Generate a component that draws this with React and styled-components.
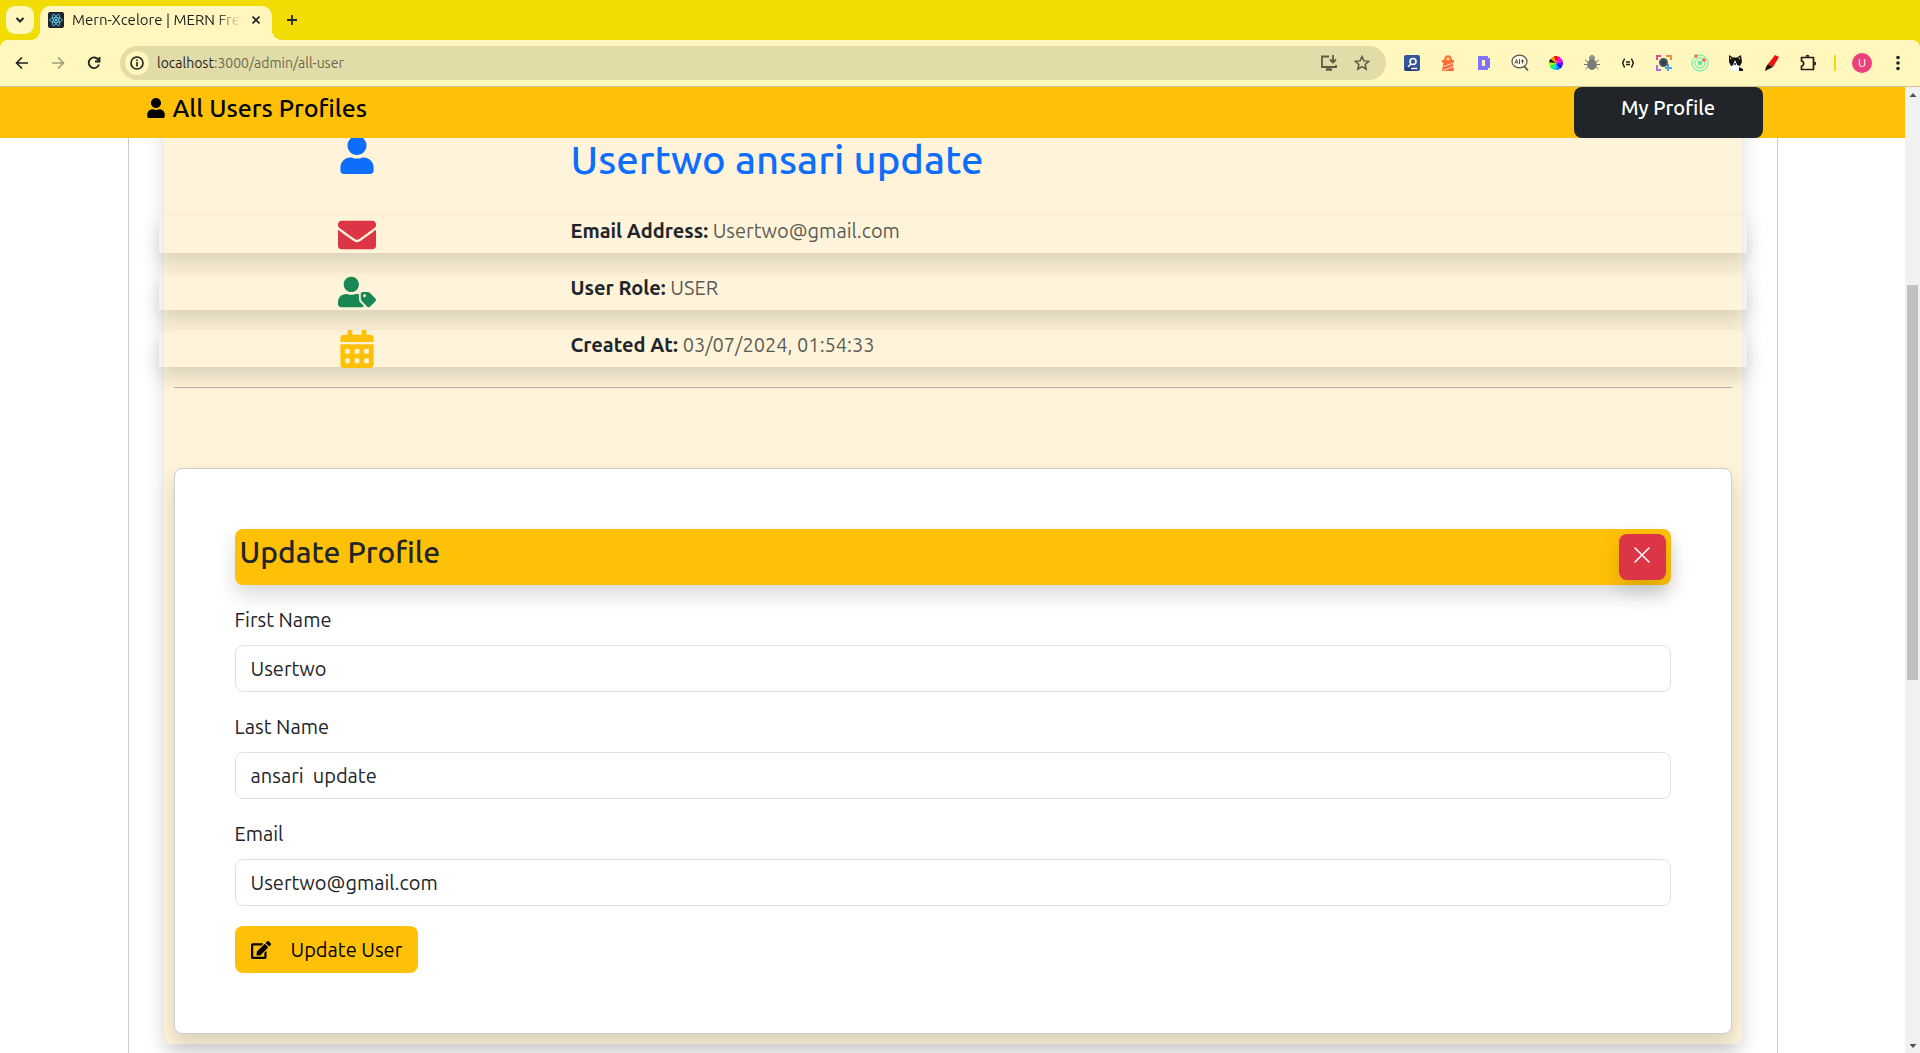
import React from "react";
import styled, { createGlobalStyle, css } from "styled-components";
import { FaUser, FaEnvelope, FaUserTag, FaCalendarAlt, FaEdit } from "react-icons/fa";

const Global = createGlobalStyle`
  *, *::before, *::after { box-sizing: border-box; }
  body {
    margin: 0;
    background: #fff;
    color: #212529;
    font: 20px/30px Ubuntu, "Noto Sans", "Open Sans", sans-serif;
  }
  h1, h2, h3, p { margin: 0; }
  button, input { font: inherit; color: inherit; }
  button { border: 0; padding: 0; background: none; cursor: pointer; }
  svg { display: block; flex: none; }
`;

const yellow = "#ffc107";
const lift = css`box-shadow: 0 10px 20px rgba(0, 0, 0, 0.15);`;
const medium = css`font-weight: 550;`;

const Window = styled.div`
  height: 100vh;
  display: flex;
  flex-direction: column;
  overflow: hidden;
`;

/* ---------- browser chrome ---------- */
const TabStrip = styled.div`
  height: 40px;
  flex: none;
  display: flex;
  align-items: flex-end;
  gap: 6px;
  padding-left: 6px;
  background: #f1dc04;
`;
const TabSearch = styled.button`
  width: 28px;
  height: 28px;
  margin-bottom: 6px;
  border-radius: 9px;
  background: #fff7bd;
  display: grid;
  place-items: center;
`;
const Tab = styled.div`
  width: 232px;
  height: 34px;
  padding: 0 8px;
  display: flex;
  align-items: center;
  border-radius: 10px 10px 0 0;
  background: #fff7bd;
  position: relative;
  &::before, &::after {
    content: "";
    position: absolute;
    bottom: 0;
    width: 10px;
    height: 10px;
  }
  &::before { left: -10px; background: radial-gradient(circle at 0 0, transparent 10px, #fff7bd 10px); }
  &::after { right: -10px; background: radial-gradient(circle at 100% 0, transparent 10px, #fff7bd 10px); }
`;
const Favicon = styled.span`
  width: 16px;
  height: 16px;
  margin-bottom: 6px;
  border-radius: 2px;
  background: #20232a;
  display: grid;
  place-items: center;
`;
const TabTitle = styled.span`
  flex: 1;
  margin: 0 8px 6px;
  overflow: hidden;
  white-space: nowrap;
  font-size: 15px;
  line-height: 20px;
  color: #1f1f1f;
  mask-image: linear-gradient(90deg, #000 calc(100% - 24px), transparent);
`;
const PlainIcon = styled.button`
  width: ${(p) => p.$w || 36}px;
  height: 28px;
  flex: none;
  display: grid;
  place-items: center;
`;
const CloseTab = styled(PlainIcon)`
  margin-bottom: 6px;
`;
const NewTab = styled(PlainIcon)`
  margin-bottom: 6px;
`;
const Toolbar = styled.div`
  height: 47px;
  flex: none;
  display: flex;
  align-items: center;
  padding: 0 4px;
  background: #fff7bd;
  border-bottom: 1px solid #c9c594;
  border-radius: 8px 8px 0 0;
  color: #1f1f1f;
`;
const ToolbarBack = styled.div`
  flex: none;
  background: #f1dc04;
`;
const Omnibox = styled.div`
  flex: 1;
  height: 34px;
  margin: 0 8px;
  padding: 0 8px 0 5px;
  display: flex;
  align-items: center;
  border-radius: 17px;
  background: #e2dca9;
  color: #5c5a45;
`;
const SiteInfo = styled.button`
  width: 24px;
  height: 24px;
  border-radius: 50%;
  background: #fff7bd;
  display: grid;
  place-items: center;
`;
const Url = styled.div`
  flex: 1;
  padding-left: 8px;
  font-size: 14px;
  line-height: 20px;
  color: #6a6750;
  b { font-weight: 400; color: #1f1f1f; }
`;
const Divider = styled.span`
  width: 2px;
  height: 16px;
  margin: 0 8px;
  background: #f1dc04;
`;
const Avatar = styled.span`
  width: 20px;
  height: 20px;
  border-radius: 50%;
  background: #ec407a;
  color: #fff;
  font-size: 12px;
  line-height: 20px;
  text-align: center;
`;

/* ---------- page ---------- */
const View = styled.div`
  flex: 1;
  min-height: 0;
  display: flex;
`;
const Page = styled.main`
  flex: 1;
  min-width: 0;
  overflow: hidden;
`;
const Header = styled.header`
  position: relative;
  z-index: 1;
  background: ${yellow};
`;
const HeaderInner = styled.div`
  max-width: 1650px;
  height: 51px;
  margin: 0 auto;
  padding: 0 15px 0 18px;
  display: flex;
  justify-content: space-between;
  color: #000;
`;
const HeaderTitle = styled.h3`
  display: flex;
  align-items: center;
  gap: 7px;
  height: 42px;
  font-size: 25px;
  line-height: 30px;
  ${medium}
`;
const ProfileButton = styled.button`
  width: 189px;
  height: 51px;
  padding-bottom: 10px;
  border-radius: 8px;
  background: #212529;
  color: #fff;
  ${medium}
`;
const Container = styled.div`
  max-width: 1650px;
  margin: -40px auto 0;
  padding: 0 35px;
  border: 1px solid #ccc;
`;
const UserCard = styled.section`
  padding: 37px 10px 10px;
  margin-bottom: 60px;
  border-radius: 8px;
  background: #fff3d9;
  ${lift}
`;
const Row = styled.div`
  display: flex;
  margin: 0 -15px 20px;
  ${(p) => p.$lift && lift}
`;
const IconCell = styled.div`
  width: 25%;
  height: 37px;
  display: flex;
  align-items: center;
  justify-content: center;
  color: ${(p) => p.$color};
`;
const TextCell = styled.div`
  width: 75%;
  padding: 0 15px;
`;
const UserName = styled.h1`
  height: 60px;
  font-size: 40px;
  line-height: 48px;
  color: #0d6efd;
  ${medium}
`;
const Fact = styled.p`
  color: rgba(33, 37, 41, 0.75);
  strong { color: #212529; }
`;
const Rule = styled.hr`
  margin: 20px 0 80px;
  border: 0;
  border-top: 1px solid rgba(33, 37, 41, 0.3);
`;
const FormCard = styled.form`
  padding: 60px;
  border: 1px solid #ccc;
  border-radius: 8px;
  background: #fff;
  ${lift}
`;
const FormHead = styled.div`
  display: flex;
  justify-content: space-between;
  padding: 5px;
  margin-bottom: 20px;
  border-radius: 8px;
  background: ${yellow};
  ${lift}
`;
const FormTitle = styled.h2`
  font-size: 30px;
  line-height: 36px;
  ${medium}
`;
const CloseButton = styled.button`
  width: 47px;
  height: 46px;
  padding-bottom: 4px;
  display: grid;
  place-items: center;
  border-radius: 8px;
  background: #dc3545;
  color: #fff;
  ${lift}
`;
const Field = styled.div`
  display: flex;
  flex-direction: column;
  gap: 10px;
  margin-bottom: 20px;
`;
const Input = styled.input`
  width: 100%;
  height: 47px;
  padding: 0 15px;
  border: 1px solid #dee2e6;
  border-radius: 8px;
  background: #fff;
`;
const Submit = styled.button`
  height: 47px;
  padding: 0 16px;
  display: flex;
  align-items: center;
  gap: 20px;
  border-radius: 8px;
  background: ${yellow};
  color: #000;
`;

/* ---------- scrollbar ---------- */
const Scrollbar = styled.div`
  width: 15px;
  flex: none;
  display: flex;
  flex-direction: column;
  align-items: center;
  background: #f1f1f1;
`;
const Arrow = styled.span`
  height: 15px;
  display: grid;
  place-items: center;
`;
const Space = styled.span`flex: ${(p) => p.$n};`;
const Thumb = styled.span`
  flex: 395;
  width: 11px;
  background: #c1c1c1;
`;

const Svg = ({ s = 20, vb = 20, children, ...r }) => (
  <svg width={s} height={s} viewBox={`0 0 ${vb} ${vb}`} fill="none" stroke="currentColor" strokeWidth="2" aria-hidden="true" {...r}>
    {children}
  </svg>
);

const extensions = [
  ["Search", <Svg s={16} vb={16} stroke="none"><rect width="16" height="16" rx="2" fill="#34569c" /><path d="M0 14l6-5 8 7H2z" fill="#24407c" /><circle cx="9" cy="6.500" r="3" stroke="#fff" strokeWidth="1.600" /><path d="M7 9L4 12M7 13.500h6" stroke="#fff" strokeWidth="1.600" /></Svg>],
  ["Lighthouse", <Svg s={16} vb={16} stroke="none"><path d="M4 5c0-6.500 8-6.500 8 0z" fill="#ff6a3d" /><path d="M2 5h12v2.500h-1.500L14 16H2l1.500-8.500H2z" fill="#ff6a3d" /><circle cx="8" cy="4" r="1.800" fill="#ffe04f" /><path d="M3.500 11.500l8.500-3M3 15.500l10.500-4" stroke="#ffd9c4" strokeWidth="1" /></Svg>],
  ["Designer", <Svg s={16} vb={16} stroke="none"><path fillRule="evenodd" d="M2 1h10v2h2v10h-2v2H2zM6 5v6h3V5z" fill="#7f73ff" /></Svg>],
  ["Alt text", <Svg s={18} vb={18} stroke="#555" strokeWidth="1.200"><ellipse cx="8.500" cy="7.500" rx="7.500" ry="6.300" fill="#fffbe0" /><path d="M13 12l4 4.500" strokeWidth="1.800" /><path d="M4 9.500l1.500-4 1.500 4M4.500 8.500h2M8.500 5v5M10 7h3M11.500 5.500v4" strokeWidth="1" /></Svg>],
  ["Colour wheel", <Svg s={14} vb={14} stroke="none">{["#ff0000", "#ff00a0", "#ff00ff", "#8000ff", "#0000ff", "#0080ff", "#00e0e0", "#00ff40", "#a0ff00", "#111111", "#ff9000"].map((c, i) => {
    const step = (2 * Math.PI) / 11, a = i * step - 1.9, b = a + step;
    return <path key={c} fill={c} d={`M7 7L${7 + 7 * Math.cos(a)} ${7 + 7 * Math.sin(a)}A7 7 0 0 1 ${7 + 7 * Math.cos(b)} ${7 + 7 * Math.sin(b)}z`} />;
  })}</Svg>],
  ["Bug", <Svg s={16} vb={16} stroke="#777" strokeWidth="1"><circle cx="8" cy="3" r="2.400" fill="#999" /><ellipse cx="8" cy="9.500" rx="4.200" ry="5" fill="#7c7c7c" /><path d="M1 5l3 2M15 5l-3 2M0 9.500h4M16 9.500h-4M1.500 14l3-2.500M14.500 14l-3-2.500" /></Svg>],
  ["JSON", <Svg s={14} vb={14} strokeWidth="1.500"><path d="M4 3C2 3 3 7 1 7c2 0 1 4 3 4M10 3c2 0 1 4 3 4-2 0-1 4-3 4M5 6h4M5 8.500h4" /></Svg>],
  ["Capture", <Svg s={16} vb={16}><path d="M1 5V1h4" stroke="#ec4899" /><path d="M10 1h5v4" stroke="#f08a4b" /><path d="M1 10v5h4" stroke="#b06ae0" /><path d="M12 9v7M9 13h7" stroke="#4aa8e0" /><circle cx="7.500" cy="7.500" r="3.500" fill="#333f50" stroke="#4b5563" /></Svg>],
  ["Orbit", <Svg s={18} vb={18} stroke="#7df0b8" strokeWidth="1.300"><circle cx="9" cy="9" r="8" /><circle cx="9" cy="9" r="5" /><circle cx="9" cy="9" r="2.400" fill="#5ce8a4" stroke="none" /><circle cx="5" cy="2" r="1.700" fill="#f26b3a" stroke="none" /><circle cx="13" cy="6" r="1.700" fill="#f2553a" stroke="none" /></Svg>],
  ["Cat", <Svg s={16} vb={16} stroke="none"><path d="M4 8h7l2 5 1 3H3l-1-4z" fill="#fff" /><path d="M1 0l4 2.500h4L13 0l1 7-2 4-3-1-2-4-1 4-3 1-2-4z" fill="#151515" /><path d="M7 5l2 5H5z" fill="#fff" /><path d="M2 2l2 1.500-2 1zM12 2l-2 1.500 2 1z" fill="#f0a030" /><circle cx="7" cy="9" r="1" fill="#151515" /><path d="M11 12l4 2v2h-4z" fill="#151515" /></Svg>],
  ["Marker", <Svg s={16} vb={16} stroke="none"><path d="M11 0l4 2-6 10-5-3z" fill="#ef1010" /><path d="M4 9l5 3-4 2-4 2 1-4z" fill="#2a1010" /></Svg>],
  ["Extensions", <Svg s={18} vb={18} strokeWidth="1.700"><path d="M2.500 3.500h12v12h-12v-3.500c2.800 0 2.800-5 0-5z" strokeLinejoin="round" /><path d="M6.500 2.700a2 2 0 0 1 4 0zM15.200 7.500a2 2 0 0 1 0 4z" fill="currentColor" stroke="none" /></Svg>],
];

const facts = [
  [FaEnvelope, "#dc3545", "Email Address:", "Usertwo@gmail.com"],
  [FaUserTag, "#198754", "User Role:", "USER"],
  [FaCalendarAlt, yellow, "Created At:", "03/07/2024, 01:54:33"],
];
const fields = [
  ["firstName", "First Name", "text", "Usertwo"],
  ["lastName", "Last Name", "text", "ansari  update"],
  ["email", "Email", "text", "Usertwo@gmail.com"],
];

function BrowserChrome() {
  return (
    <>
      <TabStrip>
        <TabSearch aria-label="Search tabs"><Svg s={10} vb={10}><path d="M1.500 3L5 6.500 8.500 3" /></Svg></TabSearch>
        <Tab>
          <Favicon>
            <Svg s={14} vb={14} stroke="#61dafb" strokeWidth="0.800">
              <ellipse cx="7" cy="7" rx="6.300" ry="2.400" />
              <ellipse cx="7" cy="7" rx="6.300" ry="2.400" transform="rotate(60 7 7)" />
              <ellipse cx="7" cy="7" rx="6.300" ry="2.400" transform="rotate(120 7 7)" />
              <circle cx="7" cy="7" r="1" fill="#61dafb" />
            </Svg>
          </Favicon>
          <TabTitle>Mern-Xcelore | MERN Fre</TabTitle>
          <CloseTab $w={16} aria-label="Close tab"><Svg s={8} vb={8} strokeWidth="1.600"><path d="M0.500 0.500l7 7M7.500 0.500l-7 7" /></Svg></CloseTab>
        </Tab>
        <NewTab $w={28} aria-label="New tab"><Svg s={10} vb={10} strokeWidth="1.800"><path d="M5 0v10M0 5h10" /></Svg></NewTab>
      </TabStrip>
      <ToolbarBack>
        <Toolbar>
          <PlainIcon aria-label="Back"><Svg s={14} vb={14} strokeWidth="1.600"><path d="M13 7H2M7 1.500L1.500 7 7 12.500" /></Svg></PlainIcon>
          <PlainIcon aria-label="Forward"><Svg s={14} vb={14} stroke="#a09c78" strokeWidth="1.600"><path d="M1 7h11M7 1.500L12.500 7 7 12.500" /></Svg></PlainIcon>
          <PlainIcon aria-label="Reload"><Svg s={14} vb={14} strokeWidth="1.800"><path d="M12 8.500A5.300 5.300 0 1 1 11.500 4M12.500 1v4.500H8" /></Svg></PlainIcon>
          <Omnibox>
            <SiteInfo aria-label="Site information"><Svg s={14} vb={14} stroke="#1f1f1f" strokeWidth="1.600"><circle cx="7" cy="7" r="6" /><path d="M7 6v4.500M7 3.500V5" /></Svg></SiteInfo>
            <Url><b>localhost</b>:3000/admin/all-user</Url>
            <PlainIcon $w={33} aria-label="Install"><Svg s={18} vb={18} strokeWidth="1.800"><path d="M9 2.500H2v10.500h14V11M13 1v7M10 5.500l3 3 3-3" /><path d="M6 15.500h6" strokeWidth="2.500" /></Svg></PlainIcon>
            <PlainIcon $w={33} aria-label="Bookmark"><Svg s={16} vb={16} strokeWidth="1.500"><path d="M8 1.500l1.900 4.400 4.800.4-3.600 3.200 1.100 4.700L8 11.700l-4.200 2.500 1.100-4.700L1.300 6.300l4.800-.4z" /></Svg></PlainIcon>
          </Omnibox>
          {extensions.map(([name, icon]) => <PlainIcon key={name} aria-label={name}>{icon}</PlainIcon>)}
          <Divider />
          <PlainIcon aria-label="Account"><Avatar>U</Avatar></PlainIcon>
          <PlainIcon aria-label="Menu"><Svg s={16} vb={16} stroke="none" fill="currentColor"><circle cx="8" cy="2.500" r="1.800" /><circle cx="8" cy="8" r="1.800" /><circle cx="8" cy="13.500" r="1.800" /></Svg></PlainIcon>
        </Toolbar>
      </ToolbarBack>
    </>
  );
}

export default function App() {
  return (
    <Window>
      <Global />
      <BrowserChrome />
      <View>
        <Page>
          <Header>
            <HeaderInner>
              <HeaderTitle><FaUser size={20} />All Users Profiles</HeaderTitle>
              <ProfileButton>My Profile</ProfileButton>
            </HeaderInner>
          </Header>
          <Container>
            <UserCard>
              <Row>
                <IconCell $color="#0d6efd"><FaUser size={38} /></IconCell>
                <TextCell><UserName>Usertwo ansari update</UserName></TextCell>
              </Row>
              {facts.map(([Icon, color, label, value]) => (
                <Row key={label} $lift>
                  <IconCell $color={color}><Icon size={38} /></IconCell>
                  <TextCell><Fact><strong>{label}</strong> {value}</Fact></TextCell>
                </Row>
              ))}
              <Rule />
              <FormCard onSubmit={(e) => e.preventDefault()}>
                <FormHead>
                  <FormTitle>Update Profile</FormTitle>
                  <CloseButton type="button" aria-label="Close"><Svg s={16} vb={16} strokeWidth="1.500" strokeLinecap="round"><path d="M1 1l14 14M15 1L1 15" /></Svg></CloseButton>
                </FormHead>
                {fields.map(([id, label, type, value]) => (
                  <Field key={id}>
                    <label htmlFor={id}>{label}</label>
                    <Input id={id} type={type} defaultValue={value} />
                  </Field>
                ))}
                <Submit type="submit"><FaEdit size={20} />Update User</Submit>
              </FormCard>
            </UserCard>
          </Container>
        </Page>
        <Scrollbar aria-hidden="true">
          <Arrow><Svg s={8} vb={8} stroke="none"><path d="M0.500 6L4 2l3.500 4z" fill="#505050" /></Svg></Arrow>
          <Space $n={183} />
          <Thumb />
          <Space $n={358} />
          <Arrow><Svg s={8} vb={8} stroke="none"><path d="M0.500 2L4 6l3.500-4z" fill="#505050" /></Svg></Arrow>
        </Scrollbar>
      </View>
    </Window>
  );
}
